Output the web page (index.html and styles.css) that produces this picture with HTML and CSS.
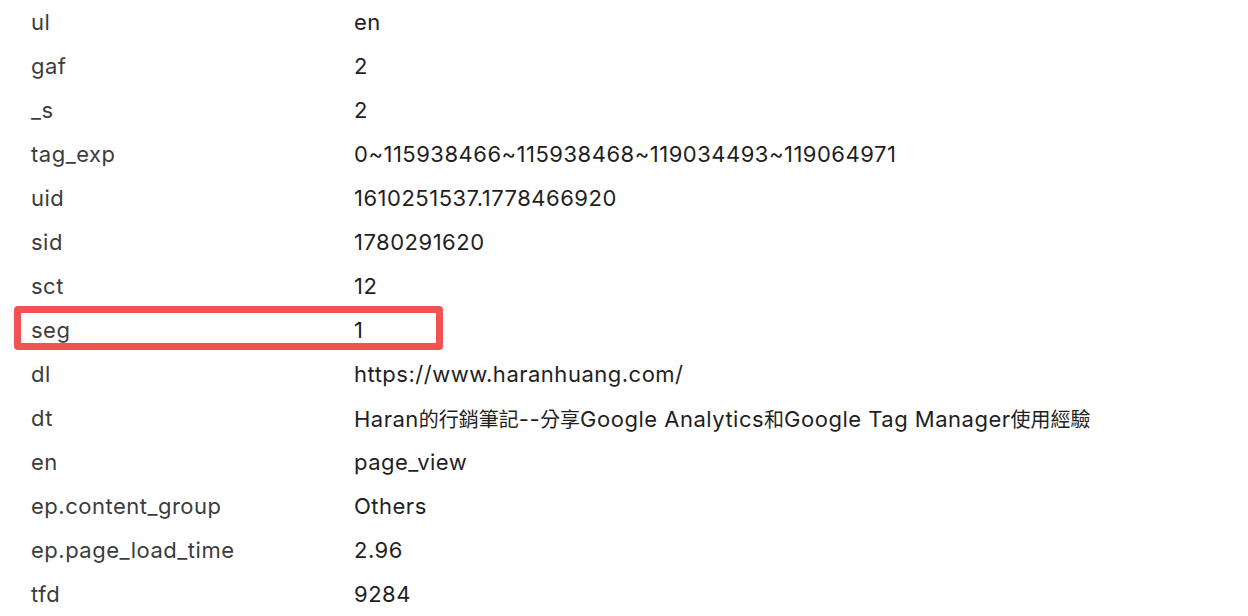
FILE: index.html
```html
<!DOCTYPE html>
<html lang="en">
<head>
    <meta charset="UTF-8">
    <meta name="viewport" content="width=device-width, initial-scale=1.0">
    <title>Request parameters</title>
    <link rel="stylesheet" href="styles.css">
</head>
<body>
    <div id="params">
        <div class="row"><span class="key">ul</span><span class="val">en</span></div>
        <div class="row"><span class="key">gaf</span><span class="val">2</span></div>
        <div class="row"><span class="key">_s</span><span class="val">2</span></div>
        <div class="row"><span class="key">tag_exp</span><span class="val">0~115938466~115938468~119034493~119064971</span></div>
        <div class="row"><span class="key">uid</span><span class="val">1610251537.1778466920</span></div>
        <div class="row"><span class="key">sid</span><span class="val">1780291620</span></div>
        <div class="row"><span class="key">sct</span><span class="val">12</span></div>
        <div class="row marked"><span class="key">seg</span><span class="val">1</span></div>
        <div class="row"><span class="key">dl</span><span class="val">https://www.haranhuang.com/</span></div>
        <div class="row"><span class="key">dt</span><span class="val">Haran<span class="cjk">的行銷筆記</span>--<span class="cjk">分享</span>Google Analytics<span class="cjk">和</span>Google Tag Manager<span class="cjk">使用經驗</span></span></div>
        <div class="row"><span class="key">en</span><span class="val">page_view</span></div>
        <div class="row"><span class="key">ep.content_group</span><span class="val">Others</span></div>
        <div class="row"><span class="key">ep.page_load_time</span><span class="val">2.96</span></div>
        <div class="row"><span class="key">tfd</span><span class="val">9284</span></div>
    </div>
</body>
</html>
```
FILE: styles.css
```css
body {
    margin: 0;
    padding: 0;
    background-color: #ffffff;
    font-family: Inter, "Noto Sans CJK TC", sans-serif;
    font-size: 22px;
    letter-spacing: 0.5px;
}

#params {
    padding-left: 31px;
}

.row {
    display: grid;
    grid-template-columns: 323px 1fr;
    align-items: center;
    height: 44px;
    position: relative;
}

.key {
    color: #3c3c3c;
}

.val {
    color: #1f1f1f;
}

.cjk {
    font-size: 20px;
    letter-spacing: 0;
}

.row.marked::after {
    content: "";
    position: absolute;
    left: -17px;
    top: -2px;
    width: 415px;
    height: 30px;
    border: 7px solid #f35252;
    border-radius: 4px;
}
```
